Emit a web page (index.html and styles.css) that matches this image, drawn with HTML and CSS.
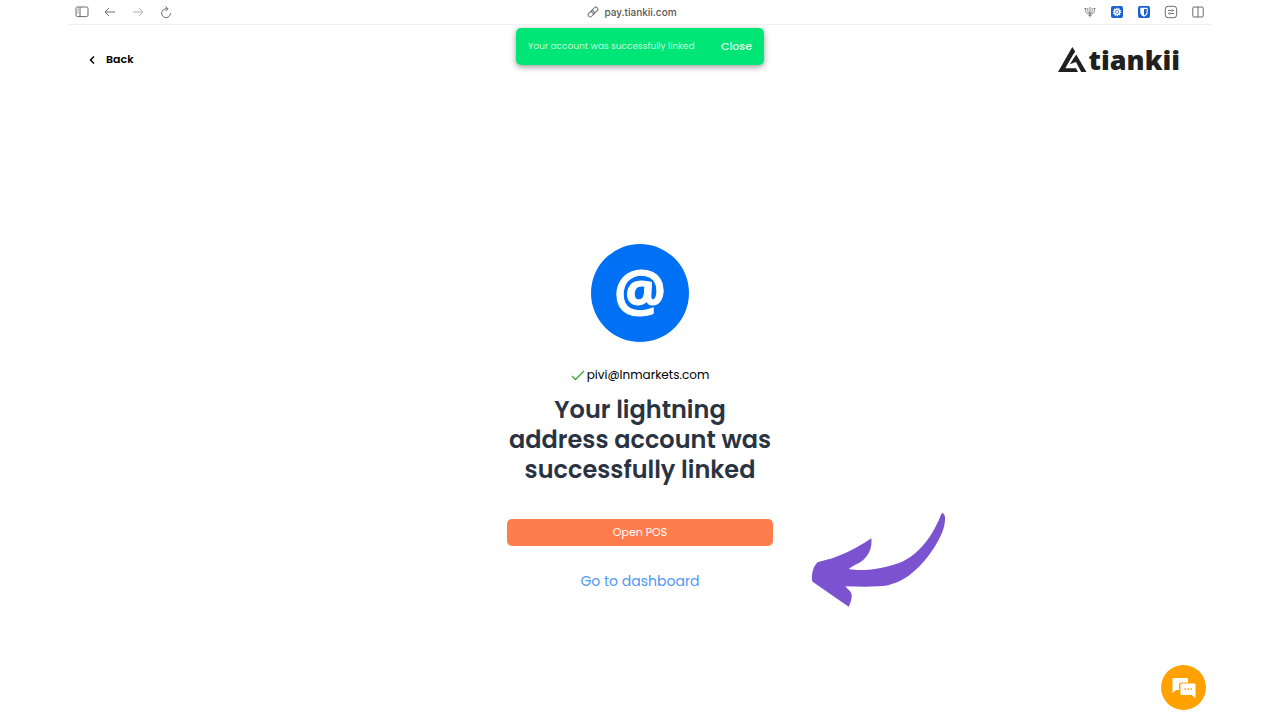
FILE: index.html
```html
<!DOCTYPE html>
<html lang="en">
<head>
  <meta charset="utf-8">
  <title>Tiankii Pay</title>
  <meta name="viewport" content="width=device-width, initial-scale=1">
  <link rel="stylesheet" href="styles.css">
</head>
<body>
  <nav class="toolbar" aria-label="Browser">
    <div class="tools">
      <button type="button" aria-label="Sidebar">
        <svg width="14" height="12" viewBox="0 0 14 12"><rect x="1" y="1" width="12" height="9.600" rx="1.500"/><path d="M5 1v9.600M2.500 3h1M2.500 4.800h1M2.500 6.600h1"/></svg>
      </button>
      <button type="button" aria-label="Previous page">
        <svg width="14" height="12" viewBox="0 0 14 12"><path d="M12 6H2M6 2L2 6l4 4"/></svg>
      </button>
      <button type="button" class="faded" aria-label="Next page">
        <svg width="14" height="12" viewBox="0 0 14 12"><path d="M2 6h10M8 2l4 4-4 4"/></svg>
      </button>
      <button type="button" aria-label="Reload">
        <svg width="14" height="14" viewBox="0 0 14 14"><path d="M8.500 3.800H7a4.400 4.400 0 1 0 4.500 4.400M6.500 1.300l2.400 2.500-2.400 2.500"/></svg>
      </button>
    </div>
    <div class="address">
      <svg width="12" height="12" viewBox="0 0 12 12"><g transform="rotate(-45 6 6)"><rect x="0" y="4" width="7" height="4" rx="2"/><rect x="5" y="4" width="7" height="4" rx="2"/></g></svg>
      <span>pay.tiankii.com</span>
    </div>
    <div class="tools extensions">
      <button type="button" aria-label="Trident">
        <svg width="14" height="12" viewBox="0 0 14 12"><path d="M7 1v10.500M5.500 9.500h3M2.500 2v2c0 2.600 1.500 4 4.500 4s4.500-1.400 4.500-4V2M4.800 2v2.500c0 1.500.6 2 2.200 3 1.600-1 2.200-1.500 2.200-3V2M1.500 3l1-1 1 1M10.500 3l1-1 1 1" stroke-width=".8"/></svg>
      </button>
      <button type="button" aria-label="Settings extension">
        <svg width="14" height="14" viewBox="0 0 14 14"><rect class="blue" x="1" y="1" width="12" height="12" rx="2"/><circle class="white" cx="7" cy="7" r="3.200"/><circle class="white-line" cx="7" cy="7" r="3.700" stroke-width="1.200" stroke-dasharray="1.200 1.100"/><circle class="blue-line" cx="7" cy="7" r="1.600" stroke-width=".7"/></svg>
      </button>
      <button type="button" aria-label="Password manager">
        <svg width="14" height="14" viewBox="0 0 14 14"><rect class="blue" x="1" y="1" width="12" height="12" rx="2"/><path class="white" d="M3.300 2.800h7.400v4.400c0 2.200-1.700 3.500-3.700 4.500-2-1-3.700-2.300-3.700-4.500z"/><path class="blue" d="M7 4h2.600v3.200c0 1.400-1.100 2.300-2.600 3.200z"/></svg>
      </button>
      <button type="button" aria-label="Page settings">
        <svg width="14" height="14" viewBox="0 0 14 14"><rect x="1.300" y="1.300" width="11.400" height="11.400" rx="3"/><path d="M4 5.500h3.500M9 5.500h1M4 8.500h1M6.500 8.500H10" stroke-width=".9"/><circle cx="8.200" cy="5.500" r=".8" stroke-width=".8"/><circle cx="5.800" cy="8.500" r=".8" stroke-width=".8"/></svg>
      </button>
      <button type="button" aria-label="Split view">
        <svg width="14" height="12" viewBox="0 0 14 12"><rect x="1.800" y="1" width="10.400" height="10" rx="1"/><path d="M7 1v10"/></svg>
      </button>
    </div>
  </nav>

  <header class="header">
    <a href="#" class="back">
      <svg width="8" height="10" viewBox="0 0 8 10"><path d="M6 1.500L2.500 5 6 8.500"/></svg>
      Back
    </a>
    <a href="#" class="logo">
      <svg width="29" height="26" viewBox="0 0 29 26"><path d="M14.300 0L0 25h20l-2-3.800H7.300L14.300 9l2.900-4.500zM11.800 17.200L18.200 7.500 28.500 25h-5.300L18 15z"/></svg>
      <span>tiankii</span>
    </a>
  </header>

  <div class="toast" role="status">
    <span>Your account was successfully linked</span>
    <button type="button">Close</button>
  </div>

  <main class="main">
    <section class="card">
      <div class="avatar">@</div>
      <p class="email">
        <svg width="14" height="12" viewBox="0 0 14 12"><path d="M1 7l3.500 3.500L13 2"/></svg>
        <span>pivi@lnmarkets.com</span>
      </p>
      <h1>Your lightning address account was successfully linked</h1>
      <button type="button" class="open">Open POS</button>
      <a href="#" class="dashboard">Go to dashboard</a>
      <svg class="arrow" width="136" height="96" viewBox="60 36 408 288"><path d="M455 40q8-3 10 12c1 24-7 50-29 85-35 55-90 119-170 122-34 2-68 1-100 0 9 12 19 15 19 29 0 11-4 22-9 32L69 246c-7-6-3-43 12-58 9-5 31-7 63-20 36-13 74-35 100-53 3 26-6 51-28 68-14 10-30 15-40 24 43 8 107 1 165-24 49-24 89-77 114-143z"/></svg>
    </section>
  </main>

  <button type="button" class="chat" aria-label="Open chat">
    <svg width="24" height="22" viewBox="0 0 24 22"><path d="M1.500 1h13.500q1 0 1 1v3.500H9q-2 0-2 2V13H4.200L.5 16V2q0-1 1-1z"/><path d="M9.500 6.500h13q1 0 1 1v13.700L19.800 18H9.500q-1 0-1-1V7.500q0-1 1-1z"/><path class="dots" d="M12.500 12h1.500M15.500 12H17M18.500 12H20"/></svg>
  </button>
</body>
</html>
```
FILE: styles.css
```css
* {
  box-sizing: border-box;
}

body {
  display: flex;
  flex-direction: column;
  min-height: 100vh;
  margin: 0;
  background: white;
  color: black;
  font-family: Poppins, Inter, sans-serif;
}

button {
  padding: 0;
  border: 0;
  background: none;
  font-family: inherit;
  cursor: pointer;
}

a {
  text-decoration: none;
}

svg {
  display: block;
  flex: none;
}

.toolbar {
  display: grid;
  grid-template-columns: 1fr auto 1fr;
  align-items: center;
  height: 25px;
  margin: 0 68px;
  padding: 0 6px;
  border-bottom: 1px solid #f1f1f1;
}

.toolbar svg {
  fill: none;
  stroke: #6b6b6b;
  stroke-width: 1;
}

.tools {
  display: flex;
  align-items: center;
  gap: 12px;
}

.tools button {
  display: flex;
  align-items: center;
  justify-content: center;
  width: 16px;
  height: 16px;
}

.extensions {
  justify-content: flex-end;
  gap: 11px;
}

.tools .faded {
  opacity: 0.5;
}

.toolbar .blue {
  fill: #1b5fd0;
  stroke: none;
}

.toolbar .white {
  fill: white;
  stroke: none;
}

.toolbar .white-line {
  stroke: white;
}

.toolbar .blue-line {
  stroke: #1b5fd0;
}

.address {
  display: flex;
  align-items: center;
  gap: 5px;
  padding-right: 16px;
  color: #555;
  font-family: Inter, sans-serif;
  font-size: 10px;
  font-weight: 500;
}

.header {
  display: flex;
  align-items: center;
  justify-content: space-between;
  height: 69px;
  padding: 0 100px 0 88px;
}

.back {
  display: flex;
  align-items: center;
  gap: 10px;
  color: black;
  font-size: 11px;
  font-weight: 600;
}

.back svg {
  fill: none;
  stroke: black;
  stroke-width: 1.5;
}

.logo {
  display: flex;
  align-items: center;
  gap: 2px;
  color: #202020;
  font-family: "Open Sans", sans-serif;
  font-size: 27px;
  font-weight: 800;
  line-height: 26px;
}

.logo svg {
  fill: #202020;
}

.toast {
  position: absolute;
  top: 28px;
  left: 50%;
  display: flex;
  align-items: center;
  justify-content: space-between;
  width: 248px;
  height: 37px;
  padding: 0 12px;
  border-radius: 5px;
  background: #00e676;
  box-shadow: 0 2px 6px rgba(0, 0, 0, 0.4);
  color: #c5fbdc;
  font-size: 9px;
  white-space: nowrap;
  transform: translateX(-50%);
}

.toast button {
  color: #e5ffee;
  font-size: 11px;
  font-weight: 500;
}

.main {
  display: flex;
  flex: 1;
  align-items: center;
  justify-content: center;
  padding-top: 23px;
}

.card {
  position: relative;
  display: flex;
  flex-direction: column;
  align-items: center;
  width: 266px;
}

.avatar {
  display: flex;
  align-items: center;
  justify-content: center;
  width: 98px;
  height: 98px;
  padding-bottom: 8px;
  border-radius: 50%;
  background: #0070f5;
  color: white;
  font-family: "Open Sans", sans-serif;
  font-size: 58px;
  font-weight: 700;
  line-height: 90px;
  -webkit-text-stroke: 1px white;
}

.email {
  display: flex;
  align-items: center;
  gap: 2px;
  margin: 22px 0 9px;
  font-size: 12px;
  line-height: 22px;
}

.email svg {
  fill: none;
  stroke: #35a83a;
  stroke-width: 1.3;
}

h1 {
  margin: 0 0 34px;
  color: #2a3342;
  font-size: 24px;
  font-weight: 600;
  line-height: 30px;
  text-align: center;
}

.open {
  width: 100%;
  height: 27px;
  margin-bottom: 23px;
  border-radius: 5px;
  background: #ff7d4d;
  color: white;
  font-size: 11px;
}

.dashboard {
  color: #4f98f3;
  font-size: 14px;
  line-height: 24px;
}

.arrow {
  position: absolute;
  top: 268px;
  left: 100%;
  margin-left: 37px;
  fill: #7b52cf;
}

.chat {
  position: fixed;
  right: 74px;
  bottom: 10px;
  display: flex;
  align-items: center;
  justify-content: center;
  width: 45px;
  height: 45px;
  border-radius: 50%;
  background: #ffa200;
}

.chat svg {
  fill: white;
}

.chat .dots {
  stroke: #ffa200;
  stroke-width: 1.5;
}
```
